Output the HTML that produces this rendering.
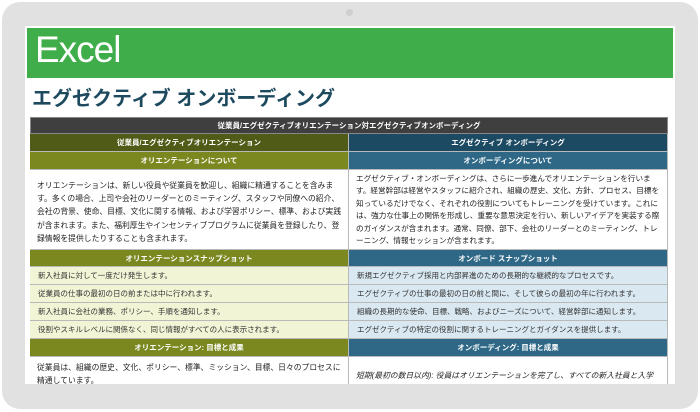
<!DOCTYPE html>
<html><head><meta charset="utf-8"><style>
*{margin:0;padding:0;box-sizing:border-box}
body{width:700px;height:412px;background:#fff;position:relative;overflow:hidden;font-family:"Liberation Sans","Noto Sans CJK JP",sans-serif}
.frame{position:absolute;left:2px;top:2px;width:696px;height:407px;background:#e1e1e1;border-radius:18px}
.cam{position:absolute;left:346px;top:9px;width:7px;height:7px;border-radius:50%;background:#cfcfcf}
.screen{position:absolute;left:25px;top:26px;width:650px;height:358px;background:#fff;overflow:hidden}
.green{position:absolute;left:2px;top:2px;width:646px;height:50px;background:#3fae4a;color:#fff;font-size:37px;font-weight:300;padding-left:8px;line-height:44px;letter-spacing:-1px}
.title{position:absolute;left:7px;top:56px;font-size:20px;font-weight:bold;color:#1e4a5f}
.r{position:absolute;font-size:7.5px;display:flex;align-items:center;border-bottom:1px solid #b9b9b9;border-right:1px solid #b9b9b9;overflow:hidden}
.h{color:#fff;font-weight:bold;justify-content:center}
.L{left:5px;width:319px}.R{left:324px;width:319px}
.t{padding:0 7px;line-height:13.2px;font-size:7.8px;align-items:flex-start;padding-top:9px;color:#222}
.s{padding-left:8px;color:#333}
.y{background:#f2f4d6}.b{background:#d9e8f1}
</style></head><body>
<div class="frame"></div><div class="cam"></div>
<div class="screen">
<div class="green">Excel</div>
<div class="title">エグゼクティブ オンボーディング</div>
<div class="r h" style="left:5px;width:638px;top:91px;height:17px;background:#3f3f3f;border:1px solid #888">従業員/エグゼクティブオリエンテーション対エグゼクティブオンボーディング</div>
<div class="r h L" style="top:108px;height:18px;background:#4f5b16">従業員/エグゼクティブオリエンテーション</div>
<div class="r h R" style="top:108px;height:18px;background:#1d4a63">エグゼクティブ オンボーディング</div>
<div class="r h L" style="top:126px;height:18px;background:#7a881f">オリエンテーションについて</div>
<div class="r h R" style="top:126px;height:18px;background:#2e6886">オンボーディングについて</div>
<div class="r t L" style="top:144px;height:80px">オリエンテーションは、新しい役員や従業員を歓迎し、組織に精通することを含みます。多くの場合、上司や会社のリーダーとのミーティング、スタッフや同僚への紹介、会社の背景、使命、目標、文化に関する情報、および学習ポリシー、標準、および実践が含まれます。また、福利厚生やインセンティブプログラムに従業員を登録したり、登録情報を提供したりすることも含まれます。</div>
<div class="r t R" style="top:144px;height:80px;padding-top:3px;line-height:12.4px;font-size:7.6px">エグゼクティブ・オンボーディングは、さらに一歩進んでオリエンテーションを行います。経営幹部は経営やスタッフに紹介され、組織の歴史、文化、方針、プロセス、目標を知っているだけでなく、それぞれの役割についてもトレーニングを受けています。これには、強力な仕事上の関係を形成し、重要な意思決定を行い、新しいアイデアを実装する際のガイダンスが含まれます。通常、同僚、部下、会社のリーダーとのミーティング、トレーニング、情報セッションが含まれます。</div>
<div class="r h L" style="top:224px;height:17px;background:#7a881f">オリエンテーションスナップショット</div>
<div class="r h R" style="top:224px;height:17px;background:#2e6886">オンボード スナップショット</div>
<div class="r s L y" style="top:241px;height:18px">新入社員に対して一度だけ発生します。</div>
<div class="r s R b" style="top:241px;height:18px">新規エグゼクティブ採用と内部昇進のための長期的な継続的なプロセスです。</div>
<div class="r s L y" style="top:259px;height:18px">従業員の仕事の最初の日の前または中に行われます。</div>
<div class="r s R b" style="top:259px;height:18px">エグゼクティブの仕事の最初の日の前と間に、そして彼らの最初の年に行われます。</div>
<div class="r s L y" style="top:277px;height:18px">新入社員に会社の業務、ポリシー、手順を通知します。</div>
<div class="r s R b" style="top:277px;height:18px">組織の長期的な使命、目標、戦略、およびニーズについて、経営幹部に通知します。</div>
<div class="r s L y" style="top:295px;height:18px">役割やスキルレベルに関係なく、同じ情報がすべての人に表示されます。</div>
<div class="r s R b" style="top:295px;height:18px">エグゼクティブの特定の役割に関するトレーニングとガイダンスを提供します。</div>
<div class="r h L" style="top:313px;height:18px;background:#7a881f">オリエンテーション: 目標と成果</div>
<div class="r h R" style="top:313px;height:18px;background:#2e6886">オンボーディング: 目標と成果</div>
<div class="r t L" style="top:331px;height:40px;padding-top:4px">従業員は、組織の歴史、文化、ポリシー、標準、ミッション、目標、日々のプロセスに精通しています。</div>
<div class="r t R" style="top:331px;height:40px;padding-top:12px;font-style:italic">短期(最初の数日以内): 役員はオリエンテーションを完了し、すべての新入社員と入学書類を提出し、組織の歴史と使命を学び、ポリシーと手続きを理解します。</div>
</div>
</body></html>
